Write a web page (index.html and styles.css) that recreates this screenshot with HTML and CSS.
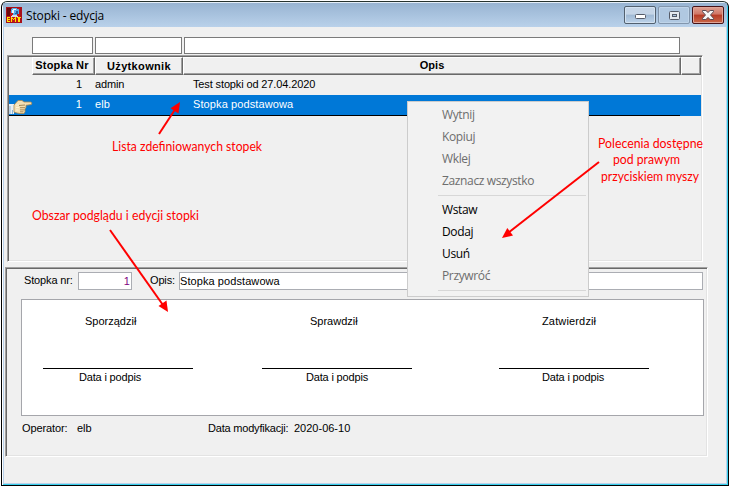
FILE: index.html
```html
<!DOCTYPE html>
<html lang="pl">
<head>
    <meta charset="UTF-8">
    <title>Stopki - edycja</title>
    <link rel="stylesheet" href="styles.css">
</head>
<body>
    <div class="window">
        <div class="titlebar">
            <svg class="app-icon" width="16" height="16" viewBox="0 0 16 16" shape-rendering="crispEdges">
                <rect width="16" height="16" fill="#a80f18"/>
                <rect x="1" y="1" width="13" height="14" fill="#c4161c"/>
                <path d="M1 1h4v3h-1v5h-3z" fill="#6d0a10"/>
                <path d="M6 1h5v1h2v5h-2v1h-4v-2h-2v-4h1z" fill="#57aee8"/>
                <path d="M7 2h3v1h-2v3h-2v-3h1z" fill="#e8f6ff"/>
                <path d="M10 4h2v3h-3v-1h1z" fill="#285b9e"/>
                <path d="M6 8h5v1h1v1h-7v-1h1z" fill="#d5dce8"/>
                <path d="M1 10h3v1h-2v1h2v1h-2v1h2v1h-3zM5 10h1v1h1v1h1v-1h1v-1h1v5h-1v-3h-1v1h-1v-1h-1v3h-1zM11 10h4v1h-1v4h-2v-4h-1z" fill="#ffe500"/>
            </svg>
            <span class="title">Stopki - edycja</span>
            <div class="buttons">
                <button class="win-btn" aria-label="Minimalizuj">
                    <svg class="min" width="11" height="5" viewBox="0 0 11 5"><rect x=".5" y=".5" width="10" height="4" rx="1" fill="#fff" stroke="#555b68"/></svg>
                </button>
                <button class="win-btn dim" aria-label="Maksymalizuj">
                    <svg width="11" height="9" viewBox="0 0 11 9"><rect x=".5" y=".5" width="10" height="8" rx="1" fill="#e4e9ef" stroke="#555b68"/><rect x="3.5" y="3.5" width="4" height="2" fill="#a9c3df" stroke="#555b68"/></svg>
                </button>
                <button class="win-btn close" aria-label="Zamknij">
                    <svg width="12" height="10" viewBox="0 0 12 10"><path d="M.5 .5h3.4l2.1 2 2.1-2h3.4v1.2l-3 3.3 3 3.3v1.2h-3.4l-2.1-2-2.1 2h-3.4v-1.2l3-3.3-3-3.3z" fill="#f6f6f6" stroke="#5a4a52"/></svg>
                </button>
            </div>
        </div>
        <div class="content">
            <div class="filters">
                <input type="text" class="filter">
                <input type="text" class="filter">
                <input type="text" class="filter">
            </div>
            <div class="grid">
                <div class="row head">
                    <span></span>
                    <span class="th nr-head">Stopka Nr</span>
                    <span class="th user">Użytkownik</span>
                    <span class="th">Opis</span>
                    <span class="th end"></span>
                </div>
                <div class="row">
                    <span></span>
                    <span class="nr">1</span>
                    <span class="cell">admin</span>
                    <span class="cell desc">Test stopki od 27.04.2020</span>
                </div>
                <div class="row selected">
                    <span class="marker">
                        <svg width="24" height="16" viewBox="0 0 24 16">
                            <path d="M0 5h5v10h-5z" fill="#e9f0f4"/>
                            <path d="M1 7v8M3.500 11v4" stroke="#8fb5d6" fill="none"/>
                            <path d="M5 6l4-4.500h4l2 1.500h7l.8 1-.4 1.500-5.400.8v2l-1 2v2.500l-1 1.700h-4l-3-.5-3-1z" fill="#f3dfb4" stroke="#a98a52" stroke-width=".8"/>
                            <path d="M10 6.500l6-.5M11 8.700h5M11 10.900h4.500M11 12.800h3.500" stroke="#8f713d" stroke-width=".8" fill="none"/>
                            <path d="M7 6h3M7 8.500h3M7 11h2.500" stroke="#fff3d2" fill="none"/>
                        </svg>
                    </span>
                    <span class="nr">1</span>
                    <span class="cell">elb</span>
                    <span class="cell desc">Stopka podstawowa</span>
                </div>
            </div>
            <div class="panel">
                <div class="form-row">
                    <label>Stopka nr:</label>
                    <input type="text" class="field number" value="1">
                    <label class="opis">Opis:</label>
                    <input type="text" class="field wide" value="Stopka podstawowa">
                </div>
                <div class="preview">
                    <div class="sign made">
                        <div class="role">Sporządził</div>
                        <div class="caption">Data i podpis</div>
                    </div>
                    <div class="sign checked">
                        <div class="role">Sprawdził</div>
                        <div class="caption">Data i podpis</div>
                    </div>
                    <div class="sign approved">
                        <div class="role">Zatwierdził</div>
                        <div class="caption">Data i podpis</div>
                    </div>
                </div>
                <div class="info">
                    <span class="operator">Operator:</span>
                    <span class="operator-name">elb</span>
                    <span class="modified">Data modyfikacji:</span>
                    <span>2020-06-10</span>
                </div>
            </div>
        </div>
    </div>

    <div class="menu">
        <div class="item off">Wytnij</div>
        <div class="item off">Kopiuj</div>
        <div class="item off">Wklej</div>
        <div class="item off">Zaznacz wszystko</div>
        <div class="sep"></div>
        <div class="item">Wstaw</div>
        <div class="item">Dodaj</div>
        <div class="item">Usuń</div>
        <div class="item off">Przywróć</div>
        <div class="sep"></div>
    </div>

    <svg class="notes" width="731" height="487" viewBox="0 0 731 487">
        <g stroke="#ff0000" stroke-width="2">
            <path d="M159 134L175 109.500"/>
            <path d="M110 230L163 305"/>
            <path d="M599 162L508 233"/>
        </g>
        <g>
            <path d="M180 102l-1.500 11.500-8-5.200z"/>
            <path d="M168 312l-9.500-6 8-5.500z"/>
            <path d="M502 238l5.300-10 5.700 7.500z"/>
        </g>
        <text x="112" y="151" textLength="150" lengthAdjust="spacingAndGlyphs">Lista zdefiniowanych stopek</text>
        <text x="32" y="220" textLength="167" lengthAdjust="spacingAndGlyphs">Obszar podglądu i edycji stopki</text>
        <text x="598" y="148" textLength="105" lengthAdjust="spacingAndGlyphs">Polecenia dostępne</text>
        <text x="613" y="164" textLength="67" lengthAdjust="spacingAndGlyphs">pod prawym</text>
        <text x="601" y="181" textLength="98" lengthAdjust="spacingAndGlyphs">przyciskiem myszy</text>
    </svg>
</body>
</html>
```
FILE: styles.css
```css
* {
    box-sizing: border-box;
}

body {
    margin: 0;
    padding: 1px;
    background: #fff;
    font-family: "Liberation Sans", Arial, sans-serif;
    font-size: 11px;
    color: #000;
}

.window {
    width: 728px;
    height: 485px;
    border: 1px solid #000;
    border-top-color: #26332f;
    border-radius: 6px 6px 0 0;
    background: #b9d1ea;
    padding: 1px 2px 2px;
    box-shadow: inset 1px 0 #fff, inset -1px -1px #36cfec, inset 0 1px #e4eef8;
    overflow: hidden;
}

.titlebar {
    display: flex;
    align-items: center;
    height: 24px;
    margin: 0 -1px;
    padding: 0 3px 0 3px;
    background: linear-gradient(#98b4d2, #b9d1ea);
}

.app-icon {
    margin-top: -1px;
}

.title {
    flex: 1;
    margin-left: 4px;
    font-family: "Open Sans", "Noto Sans", sans-serif;
    font-size: 12px;
    letter-spacing: -0.15px;
}

.buttons {
    display: flex;
    gap: 2px;
}

.win-btn {
    display: flex;
    align-items: center;
    justify-content: center;
    width: 32px;
    height: 18px;
    padding: 0;
    border: 1px solid #52606f;
    border-radius: 2px;
    background: linear-gradient(#c5d5e7 45%, #9fb9d4 50%, #bdd3ea);
    box-shadow: inset 0 0 0 1px #d3e2f1;
}

.win-btn.dim {
    border-color: #8296ad;
    background: #b0c8e1;
    box-shadow: inset 0 0 0 1px #bfd4e9;
}

.win-btn.close {
    border-color: #471318;
    background: linear-gradient(#dfa193, #cf7565 45%, #b73a25 50%, #c9694a);
    box-shadow: inset 0 0 0 1px #e0a598;
}

.min {
    margin-top: 3px;
}

.content {
    height: 456px;
    padding: 10px 0 0 1px;
    background: #f0f0f0;
}

.filters {
    display: grid;
    grid-template-columns: 61px 87px 496px;
    gap: 2px;
    padding-left: 27px;
}

.filter {
    width: 100%;
    height: 17px;
    border: 1px solid #7a7a7a;
    background: #fff;
}

/* sunken frame */
.grid,
.panel {
    border: 1px solid;
    border-color: #a0a0a0 #fff #fff #a0a0a0;
    box-shadow: inset 1px 1px #696969, inset -1px -1px #e3e3e3;
}

.grid {
    width: 696px;
    height: 207px;
    margin: 1px 0 0 2px;
    padding: 1px;
}

.row {
    display: grid;
    grid-template-columns: 23px 63px 88px 498px 20px;
    align-items: center;
    height: 20px;
    padding-bottom: 2px;
    letter-spacing: -0.13px;
}

.head {
    height: 18px;
    padding-bottom: 0;
    font-weight: bold;
    letter-spacing: 0.05px;
}

.th {
    height: 18px;
    border: 1px solid #fff;
    border-right: 1px solid #696969;
    border-bottom: 1px solid #696969;
    box-shadow: inset -1px -1px #a0a0a0;
    line-height: 15px;
    text-align: center;
}

.nr-head {
    padding-right: 3px;
    letter-spacing: 0.15px;
}

.user {
    line-height: 16px;
    letter-spacing: 0.35px;
}

.nr {
    padding-right: 13px;
    text-align: right;
}

.cell {
    white-space: nowrap;
}

.desc {
    padding-left: 10px;
}

.selected {
    height: 21px;
    padding-bottom: 3px;
    background: linear-gradient(#000, #000) 0 100% / 671px 1px no-repeat #0078d7;
    color: #fff;
    letter-spacing: 0.1px;
}

.marker {
    height: 16px;
}

.marker svg {
    display: block;
    margin-top: 3px;
}

.panel {
    width: 703px;
    height: 190px;
    margin-top: 5px;
    padding: 4px 3px 0 16px;
}

.form-row {
    display: flex;
    align-items: center;
    height: 18px;
    padding-left: 2px;
}

.form-row label {
    width: 54px;
    margin-top: -2px;
    letter-spacing: -0.15px;
}

.form-row .opis {
    width: 29px;
    margin-left: 18px;
}

.field {
    height: 18px;
    padding: 0 0 1px;
    border: 1px solid #abadb3;
    background: #fff;
    font: inherit;
    letter-spacing: 0.08px;
}

.number {
    width: 54px;
    padding-right: 1px;
    color: #800080;
    text-align: right;
}

.wide {
    width: 524px;
}

.preview {
    display: flex;
    width: 683px;
    height: 117px;
    margin: 9px 0 0 -1px;
    padding: 15px 0 0 21px;
    border: 1px solid #a5a6ab;
    background: #fff;
}

.sign {
    width: 150px;
    margin-right: 69px;
}

.role {
    height: 54px;
    padding-left: 42px;
    border-bottom: 1px solid #000;
}

.caption {
    padding: 2px 0 0 36px;
    letter-spacing: -0.17px;
}

.checked {
    margin-right: 87px;
}

.checked .role {
    padding-left: 48px;
}

.checked .caption {
    padding-left: 44px;
}

.approved {
    margin-right: 0;
}

.approved .role,
.approved .caption {
    padding-left: 43px;
}

.approved .role {
    letter-spacing: 0.15px;
}

.info {
    display: flex;
    padding-top: 6px;
}

.operator {
    width: 55px;
    letter-spacing: -0.1px;
}

.operator-name {
    width: 131px;
}

.modified {
    width: 86px;
    letter-spacing: -0.2px;
}

.menu {
    position: absolute;
    left: 407px;
    top: 101px;
    width: 182px;
    height: 196px;
    padding: 3px 2px;
    border: 1px solid #ccc;
    background: #f2f2f2;
    font-family: "Open Sans", "Noto Sans", sans-serif;
    font-size: 12px;
    letter-spacing: -0.36px;
}

.item {
    height: 22px;
    padding-left: 32px;
    line-height: 20px;
}

.off {
    color: #6d6d6d;
}

.sep {
    height: 1px;
    margin: 2px 0 4px 28px;
    background: #d7d7d7;
}

.notes {
    position: absolute;
    left: 0;
    top: 0;
    pointer-events: none;
    fill: #f00;
    font-family: Lato, "Open Sans", sans-serif;
    font-size: 13px;
}
```
